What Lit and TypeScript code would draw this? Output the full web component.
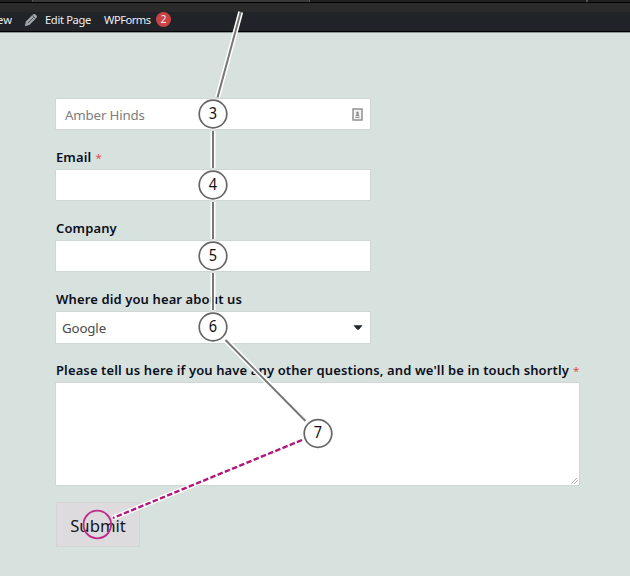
import { LitElement, html, svg, css, nothing } from "lit";
import { customElement, property } from "lit/decorators.js";

@customElement("admin-bar")
class AdminBar extends LitElement {
  static styles = css`
    :host { display: block; font: 11.2px/16px "Noto Sans", "Open Sans", sans-serif; color: #eceef0; }
    .tabs { display: flex; height: 2px; background: #1f1f1f; }
    .lead { width: 32px; }
    .active { width: 276px; background: #383838; border: solid #555; border-width: 0 1px; }
    .rest { width: 276px; border-right: 2px solid #555; }
    .tools { height: 9px; background: #2a2a2a; border-top: 1px solid #000; }
    .bar { display: flex; align-items: center; height: 19px; background: #202328; border-bottom: 1px solid #000; overflow: hidden; white-space: nowrap; }
    .edge { height: 1px; background: #8e9396; }
    .new { width: 24px; margin: -3px 0 0 -2px; flex: none; letter-spacing: 0.1px; }
    .new span { margin-left: -1px; }
    .pencil { width: 14px; height: 14px; margin: -3px 7px 0 2px; }
    .edit { width: 59px; letter-spacing: -0.36px; margin-top: -3px; }
    .forms { width: 52px; letter-spacing: -0.5px; margin-top: -3px; }
    .count { width: 15px; height: 15px; margin-top: -4px; border-radius: 50%; background: #ca4244; font-size: 10.5px; line-height: 15px; text-align: center; }
  `;
  render() {
    return html`
      <div class="tabs"><div class="lead"></div><div class="active"></div><div class="rest"></div></div>
      <div class="tools"></div>
      <div class="bar">
        <div class="new"><span>ew</span></div>
        <svg class="pencil" viewBox="0 0 14 14">
          <path d="M.8 13.2 L1.9 8.6 L8.9 1.6 Q10.2 .4 11.5 1.6 L12.4 2.5 Q13.6 3.8 12.4 5.1 L5.4 12.1 Z" fill="#a2a7ab" />
          <path d="M3.8 10.2 L9.6 4.4 M8.3 2.5 L11.5 5.7" fill="none" stroke="#34383d" stroke-width=".8" />
        </svg>
        <div class="edit">Edit Page</div>
        <div class="forms">WPForms</div>
        <div class="count">2</div>
      </div>
      <div class="edge"></div>
    `;
  }
}

@customElement("form-field")
class FormField extends LitElement {
  @property() label = "";
  @property() kind = "text";
  @property() value = "";
  @property({ type: Boolean }) required = false;

  static styles = css`
    :host { display: block; font-family: "Noto Sans", "Open Sans", sans-serif; }
    .label { height: 22px; margin-top: 17px; padding-left: 1px; font-size: 13px; font-weight: 600; line-height: 21px; letter-spacing: 0.12px; color: #0b0f1c; white-space: nowrap; }
    .star { color: #e2504c; font-weight: 400; font-size: 11.5px; margin-left: 1px; }
    .box { display: flex; align-items: center; justify-content: space-between; box-sizing: border-box; width: 316px; height: 32px; background: #fff; border: 1px solid #cfd6d4; border-radius: 1px; font-size: 13.3px; color: #4b4b4b; }
    .text { padding: 2px 7px 0 9px; color: #7d7d7d; letter-spacing: -0.18px; }
    .select { padding: 0 7px 0 6px; height: 33px; margin-bottom: -1px; letter-spacing: -0.15px; }
    .area { width: 525px; height: 104px; align-items: flex-end; justify-content: flex-end; padding: 0 1px 1px 0; }
    .card { width: 11px; height: 13px; margin-top: -2px; }
    .caret { width: 10px; height: 5px; }
    .grip { width: 7px; height: 7px; }
  `;
  render() {
    return html`
      ${this.label
        ? html`<div class="label">${this.label}${this.required ? html`<span class="star"> *</span>` : nothing}</div>`
        : nothing}
      <div class="box ${this.kind}">
        ${this.value ? html`<span>${this.value}</span>` : nothing}
        ${this.kind === "text" && this.value
          ? html`<svg class="card" viewBox="0 0 11 13">
              <rect x="1" y="1" width="9" height="11" fill="#f3f3f3" stroke="#929292" stroke-width="1.5" />
              <circle cx="5.5" cy="4.7" r="1.2" fill="#888" />
              <path d="M3.5 8.2 L4.5 5.8 H6.5 L7.5 8.2 Z M3.5 9 H7.5 V10 H3.5 Z" fill="#929292" />
            </svg>`
          : nothing}
        ${this.kind === "select"
          ? html`<svg class="caret" viewBox="0 0 10 5"><path d="M.4 .3 H9.6 L6 4.4 Q5 5.2 4 4.4 Z" fill="#20242b" /></svg>`
          : nothing}
        ${this.kind === "area"
          ? html`<svg class="grip" viewBox="0 0 7 7"><path d="M.5 6.5 L6 1 M3.5 6.5 L6.5 3.5" stroke="#777" stroke-width=".9" stroke-dasharray="1.2 .3" /></svg>`
          : nothing}
      </div>
    `;
  }
}

interface Stop { n: number; x: number; y: number; }

@customElement("tab-order")
class TabOrder extends LitElement {
  static styles = css`
    :host { display: block; }
    svg { display: block; width: 630px; height: 576px; }
    .halo { stroke: #fff; stroke-width: 5; }
    .line { stroke: #777; stroke-width: 2; }
    .next { stroke: #b0177b; stroke-width: 2.4; stroke-dasharray: 5.5 2.3; }
    .rim { fill: #fff; stroke: #666; stroke-width: 1.7; }
    .back { fill: #fff; }
    .current { fill: none; stroke: #bd2b8c; stroke-width: 1.8; }
    .num { font: 400 16.5px "Noto Sans", "Open Sans", sans-serif; fill: #111; text-anchor: middle; }
  `;
  stops: Stop[] = [
    { n: 3, x: 213, y: 114 },
    { n: 4, x: 213, y: 185 },
    { n: 5, x: 213, y: 256 },
    { n: 6, x: 213, y: 327 },
    { n: 7, x: 318, y: 433.5 },
  ];
  links = [
    [240.7, 12, 217.5, 97.5],
    [213, 131, 213, 168],
    [213, 202, 213, 239],
    [213, 273, 213, 310],
    [225.5, 340, 305.5, 421],
  ];
  render() {
    return html`<svg viewBox="0 0 630 576">
      ${this.links.map(([a, b, c, d]) => svg`
        <line class="halo" x1=${a} y1=${b} x2=${c} y2=${d} />
        <line class="line" x1=${a} y1=${b} x2=${c} y2=${d} />`)}
      <line class="halo" x1="302" y1="440" x2="113" y2="518" />
      <line class="next" x1="302" y1="440" x2="113" y2="518" />
      ${this.stops.map((s) => svg`
        <circle class="back" cx=${s.x} cy=${s.y} r="15.5" />
        <circle class="rim" cx=${s.x} cy=${s.y} r="13.8" />
        <g transform="translate(${s.x} ${s.y + 4.8}) scale(.88 1)"><text class="num">${s.n}</text></g>`)}
      <circle class="current" cx="97.3" cy="524.5" r="13.8" />
    </svg>`;
  }
}

@customElement("app-root")
class AppRoot extends LitElement {
  static styles = css`
    :host { display: block; position: relative; width: 630px; height: 576px; overflow: hidden; background: #d7e1de; }
    .form { padding: 65px 0 0 55px; }
    .submit { display: block; box-sizing: border-box; width: 84px; height: 45px; margin: 16px 0 0 1px; padding: 1px 0 0; border: 1px solid #d3d5d4; background: #dddbdd; font: 16.7px/43px "Noto Sans", "Open Sans", sans-serif; color: #15171b; text-align: center; }
    .overlay { position: absolute; top: 0; left: 0; pointer-events: none; }
  `;
  render() {
    return html`
      <admin-bar></admin-bar>
      <div class="form">
        <form-field value="Amber Hinds"></form-field>
        <form-field label="Email" required></form-field>
        <form-field label="Company"></form-field>
        <form-field label="Where did you hear about us" kind="select" value="Google"></form-field>
        <form-field label="Please tell us here if you have any other questions, and we'll be in touch shortly" kind="area" required></form-field>
        <button class="submit">Submit</button>
      </div>
      <tab-order class="overlay"></tab-order>
    `;
  }
}
